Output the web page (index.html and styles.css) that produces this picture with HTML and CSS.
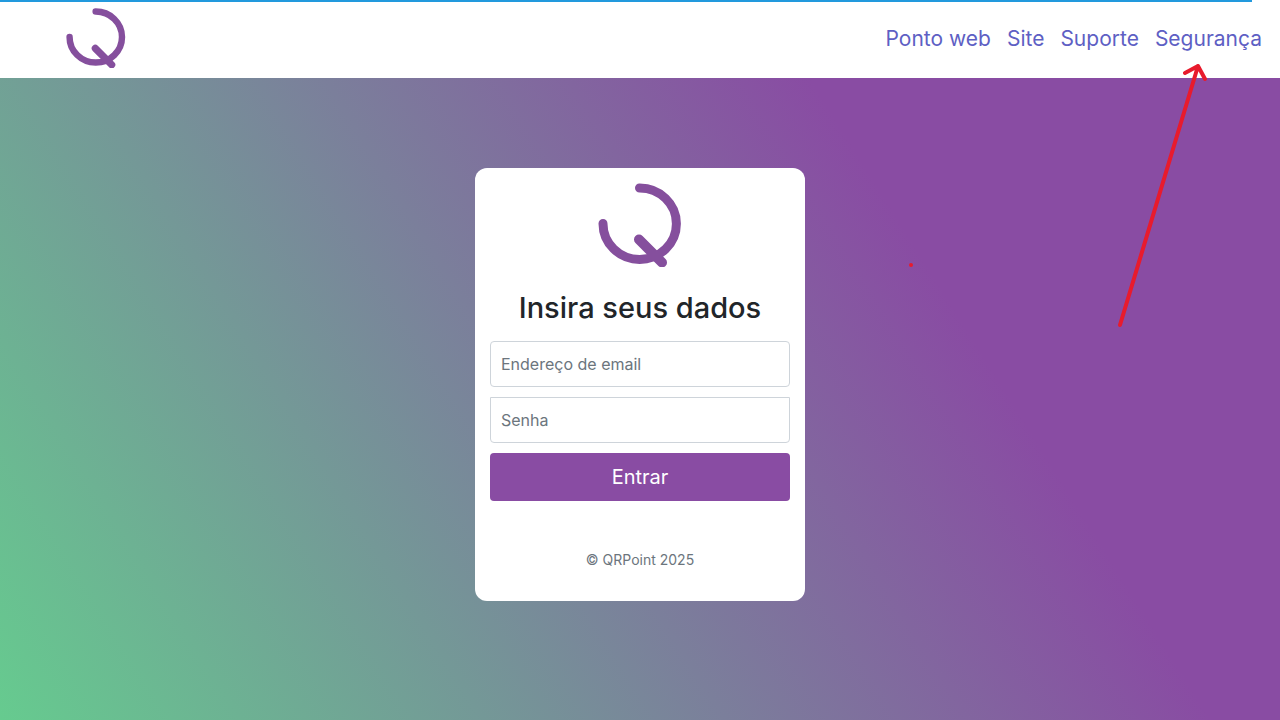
FILE: index.html
```html
<!DOCTYPE html>
<html lang="pt-BR">
<head>
<meta charset="utf-8">
<meta name="viewport" content="width=device-width, initial-scale=1">
<title>QRPoint</title>
<link rel="stylesheet" href="styles.css">
</head>
<body>
<div class="progress"></div>
<header class="topbar">
  <a class="brand" href="#" aria-label="QRPoint">
    <svg class="logo" viewBox="0 0 84 84" aria-hidden="true">
      <path d="M41.500 5A36.700 35.700 0 1 1 5 40.500"/>
      <path class="tail" d="M41 56.500L64 79.500"/>
    </svg>
  </a>
  <nav class="links">
    <a href="#">Ponto web</a>
    <a href="#">Site</a>
    <a href="#">Suporte</a>
    <a href="#">Segurança</a>
  </nav>
</header>
<main class="page">
  <form class="card">
    <svg class="logo logo-large" viewBox="0 0 84 84" aria-hidden="true">
      <path d="M41.500 5A36.700 35.700 0 1 1 5 40.500"/>
      <path class="tail" d="M41 56.500L64 79.500"/>
    </svg>
    <h1 class="title">Insira seus dados</h1>
    <input class="field" type="email" placeholder="Endereço de email" aria-label="Endereço de email">
    <input class="field field-password" type="password" placeholder="Senha" aria-label="Senha">
    <button class="submit" type="submit">Entrar</button>
    <p class="copyright">© QRPoint 2025</p>
  </form>
</main>
<svg class="annotation" viewBox="0 0 300 270" aria-hidden="true">
  <path d="M220 265L298 6M285 13L298 6L305 19"/>
  <circle cx="11" cy="205" r="2"/>
</svg>
</body>
</html>
```
FILE: styles.css
```css
* {
  box-sizing: border-box;
}

body {
  position: relative;
  display: flex;
  flex-direction: column;
  min-height: 100vh;
  margin: 0;
  background: linear-gradient(58deg, #66cb8f 0%, #894ca3 70%);
  font-family: Inter, "Noto Sans", sans-serif;
  color: #212529;
}

.progress {
  position: absolute;
  top: 0;
  left: 0;
  width: 97.8%;
  height: 2px;
  background: #2299dd;
}

.topbar {
  display: flex;
  align-items: center;
  justify-content: space-between;
  padding: 8px 18px 10px 66px;
  background: #fff;
}

.brand {
  display: flex;
}

.logo {
  width: 60px;
  height: 60px;
  fill: none;
  stroke: #854f9d;
  stroke-width: 9;
  stroke-linecap: round;
}

.tail {
  stroke-width: 10;
}

.logo-large {
  width: 84px;
  height: 84px;
}

.links {
  display: flex;
  gap: 16px;
  padding-top: 2px;
}

.links a {
  color: #5e5fc4;
  font-size: 21px;
  line-height: 30px;
  text-decoration: none;
}

.page {
  display: flex;
  flex: 1;
  align-items: center;
  justify-content: center;
  padding: 24px 16px 53px;
}

.card {
  display: flex;
  flex-direction: column;
  align-items: center;
  width: 100%;
  max-width: 330px;
  padding: 15px;
  border-radius: 12px;
  background: #fff;
}

.title {
  margin: 24px 0 16px;
  font-size: 29px;
  font-weight: 500;
  line-height: 34px;
}

.field {
  width: 100%;
  height: 46px;
  margin: 0 0 10px;
  padding: 10px;
  border: 1px solid #ced4da;
  border-radius: 4px;
  background: #fff;
  color: #495057;
  font-family: inherit;
  font-size: 16px;
}

.field::placeholder {
  color: #6c757d;
  opacity: 1;
}

.field-password {
  border-top-left-radius: 0;
  border-top-right-radius: 0;
}

.submit {
  width: 100%;
  padding: 9px 16px;
  border: 0;
  border-radius: 4px;
  background: #894ca3;
  color: #fff;
  font-family: inherit;
  font-size: 20px;
  line-height: 30px;
}

.copyright {
  margin: 48px 0 16px;
  color: #6c757d;
  font-size: 14px;
  line-height: 21px;
}

.annotation {
  position: absolute;
  top: 60px;
  left: 900px;
  width: 300px;
  height: 270px;
  overflow: visible;
  pointer-events: none;
  fill: none;
  stroke: #e81b2d;
  stroke-width: 4;
  stroke-linecap: round;
  stroke-linejoin: round;
}

.annotation circle {
  fill: #e81b2d;
  stroke: none;
}
```
